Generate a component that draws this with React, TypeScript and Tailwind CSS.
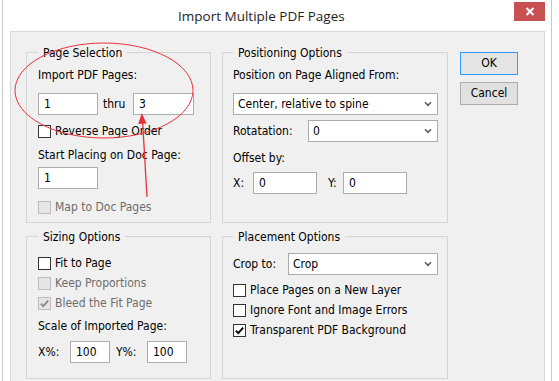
import React from "react";
import clsx from "clsx";

const Chevron = () => (
  <svg width="8" height="6" viewBox="0 0 8 6" className="shrink-0">
    <path d="M1 1.2 L4 4.3 L7 1.2" fill="none" stroke="#5a5a5a" strokeWidth="1.6" />
  </svg>
);

const Tick = ({ color }: { color: string }) => (
  <svg width="11" height="11" viewBox="0 0 11 11">
    <path d="M1.8 5.6 L4.3 8.1 L9.2 2.6" fill="none" stroke={color} strokeWidth="1.9" />
  </svg>
);

const TextBox = ({ value, width }: { value: string; width: string }) => (
  <div className={clsx("h-[22px] bg-white border border-[#acacac] pl-[5px] flex items-center", width)}>
    {value}
  </div>
);

const Select = ({ value, width }: { value: string; width: string }) => (
  <div className={clsx("h-[22px] bg-white border border-[#acacac] pl-[4px] pr-[5px] flex items-center", width)}>
    <span className="flex-1">{value}</span>
    <Chevron />
  </div>
);

type CheckProps = { label: string; checked?: boolean; disabled?: boolean; className?: string };

const Check = ({ label, checked, disabled, className }: CheckProps) => (
  <div className={clsx("flex items-center h-[15px]", className)}>
    <span
      className={clsx(
        "w-[13px] h-[13px] border flex items-center justify-center shrink-0",
        disabled ? "bg-[#e6e6e6] border-[#bcbcbc]" : "bg-white border-[#333333]"
      )}
    >
      {checked && <Tick color={disabled ? "#8a8a8a" : "#000"} />}
    </span>
    <span className={clsx("ml-[4px]", disabled && "text-[#6d6d6d]")}>{label}</span>
  </div>
);

const Group = ({ title, className, children }: { title: string; className: string; children: React.ReactNode }) => (
  <div className={clsx("border border-[#d5d5d5] flex flex-col", className)}>
    <div className="-mt-[7px] px-[5px] w-fit bg-[#f0f0f0] leading-[15px]">{title}</div>
    {children}
  </div>
);

export default function App() {
  return (
    <div className="w-[559px] h-[381px] overflow-hidden bg-white relative font-['DejaVu_Sans_Condensed','DejaVu_Sans',sans-serif] text-[12px] leading-[15px] text-black">
      <div className="ml-[2px] w-[550px] h-full border-x border-[#c9c9c9] bg-white flex flex-col">
        {/* title bar */}
        <div className="h-[31px] flex items-start shrink-0">
          <span className="ml-[175px] mt-[6px] font-['Open_Sans',sans-serif] text-[13.5px] leading-[20px] text-[#1e1e1e]">
            Import Multiple PDF Pages
          </span>
          <div className="ml-auto mr-[6px] mt-[2px] w-[31px] h-[19px] bg-[#c75050] flex items-center justify-center">
            <svg width="10" height="9" viewBox="0 0 10 9">
              <path d="M1.5 1 L8.5 8 M8.5 1 L1.5 8" stroke="#fff" strokeWidth="2" />
            </svg>
          </div>
        </div>

        {/* client area */}
        <div className="ml-[7px] w-[535px] flex-1 border-x border-t border-[#d9d9d9] bg-[#f0f0f0] pl-[15px] pt-[20px] flex items-start">
          {/* left column */}
          <div className="flex flex-col">
            <Group title="Page Selection" className="w-[185px] h-[171px] pl-[11px]">
              <div className="mt-[7px]">Import PDF Pages:</div>
              <div className="mt-[10px] flex items-center">
                <TextBox value="1" width="w-[60px]" />
                <span className="w-[35px] pl-[5px]">thru</span>
                <TextBox value="3" width="w-[61px]" />
              </div>
              <Check label="Reverse Page Order" className="mt-[9px]" />
              <div className="mt-[9px]">Start Placing on Doc Page:</div>
              <div className="mt-[4px]">
                <TextBox value="1" width="w-[60px]" />
              </div>
              <Check label="Map to Doc Pages" disabled className="mt-[11px]" />
            </Group>
            <Group title="Sizing Options" className="mt-[13px] w-[185px] h-[143px] pl-[11px]">
              <Check label="Fit to Page" className="mt-[11px]" />
              <Check label="Keep Proportions" disabled className="mt-[5px]" />
              <Check label="Bleed the Fit Page" disabled checked className="mt-[5px]" />
              <div className="mt-[8px]">Scale of Imported Page:</div>
              <div className="mt-[7px] flex items-center">
                <span className="w-[32px]">X%:</span>
                <TextBox value="100" width="w-[40px]" />
                <span className="w-[37px] pl-[6px]">Y%:</span>
                <TextBox value="100" width="w-[40px]" />
              </div>
            </Group>
          </div>

          {/* right column */}
          <div className="ml-[11px] flex flex-col">
            <Group title="Positioning Options" className="w-[226px] h-[171px] pl-[10px]">
              <div className="mt-[7px]">Position on Page Aligned From:</div>
              <div className="mt-[10px]">
                <Select value="Center, relative to spine" width="w-[205px]" />
              </div>
              <div className="mt-[5px] flex items-center">
                <span className="w-[75px]">Rotatation:</span>
                <Select value="0" width="w-[130px]" />
              </div>
              <div className="mt-[9px]">Offset by:</div>
              <div className="mt-[6px] flex items-center">
                <span className="w-[20px]">X:</span>
                <TextBox value="0" width="w-[64px]" />
                <span className="w-[26px] pl-[11px]">Y:</span>
                <TextBox value="0" width="w-[64px]" />
              </div>
            </Group>
            <Group title="Placement Options" className="mt-[13px] w-[226px] h-[143px] pl-[10px]">
              <div className="mt-[8px] flex items-center">
                <span className="w-[55px]">Crop to:</span>
                <Select value="Crop" width="w-[150px]" />
              </div>
              <Check label="Place Pages on a New Layer" className="mt-[8px]" />
              <Check label="Ignore Font and Image Errors" className="mt-[5px]" />
              <Check label="Transparent PDF Background" checked className="mt-[5px]" />
            </Group>
          </div>

          {/* buttons */}
          <div className="ml-[12px] flex flex-col gap-[7px]">
            <button className="w-[58px] h-[23px] border border-[#3399ff] bg-[#e5e5e5] leading-[15px]">OK</button>
            <button className="w-[58px] h-[23px] border border-[#adadad] bg-[#e1e1e1] leading-[15px]">Cancel</button>
          </div>
        </div>
      </div>

      {/* red annotation drawn over the dialog */}
      <svg className="absolute left-0 top-0 pointer-events-none" width="559" height="381">
        <ellipse cx="104" cy="90.5" rx="89" ry="47.5" fill="none" stroke="#e8323a" strokeWidth="1" />
        <path d="M147 197 L142.5 120" stroke="#e8323a" strokeWidth="1.3" fill="none" />
        <path d="M141.7 113 L138.2 124 L146.6 123.4 Z" fill="#e8323a" />
      </svg>
    </div>
  );
}
